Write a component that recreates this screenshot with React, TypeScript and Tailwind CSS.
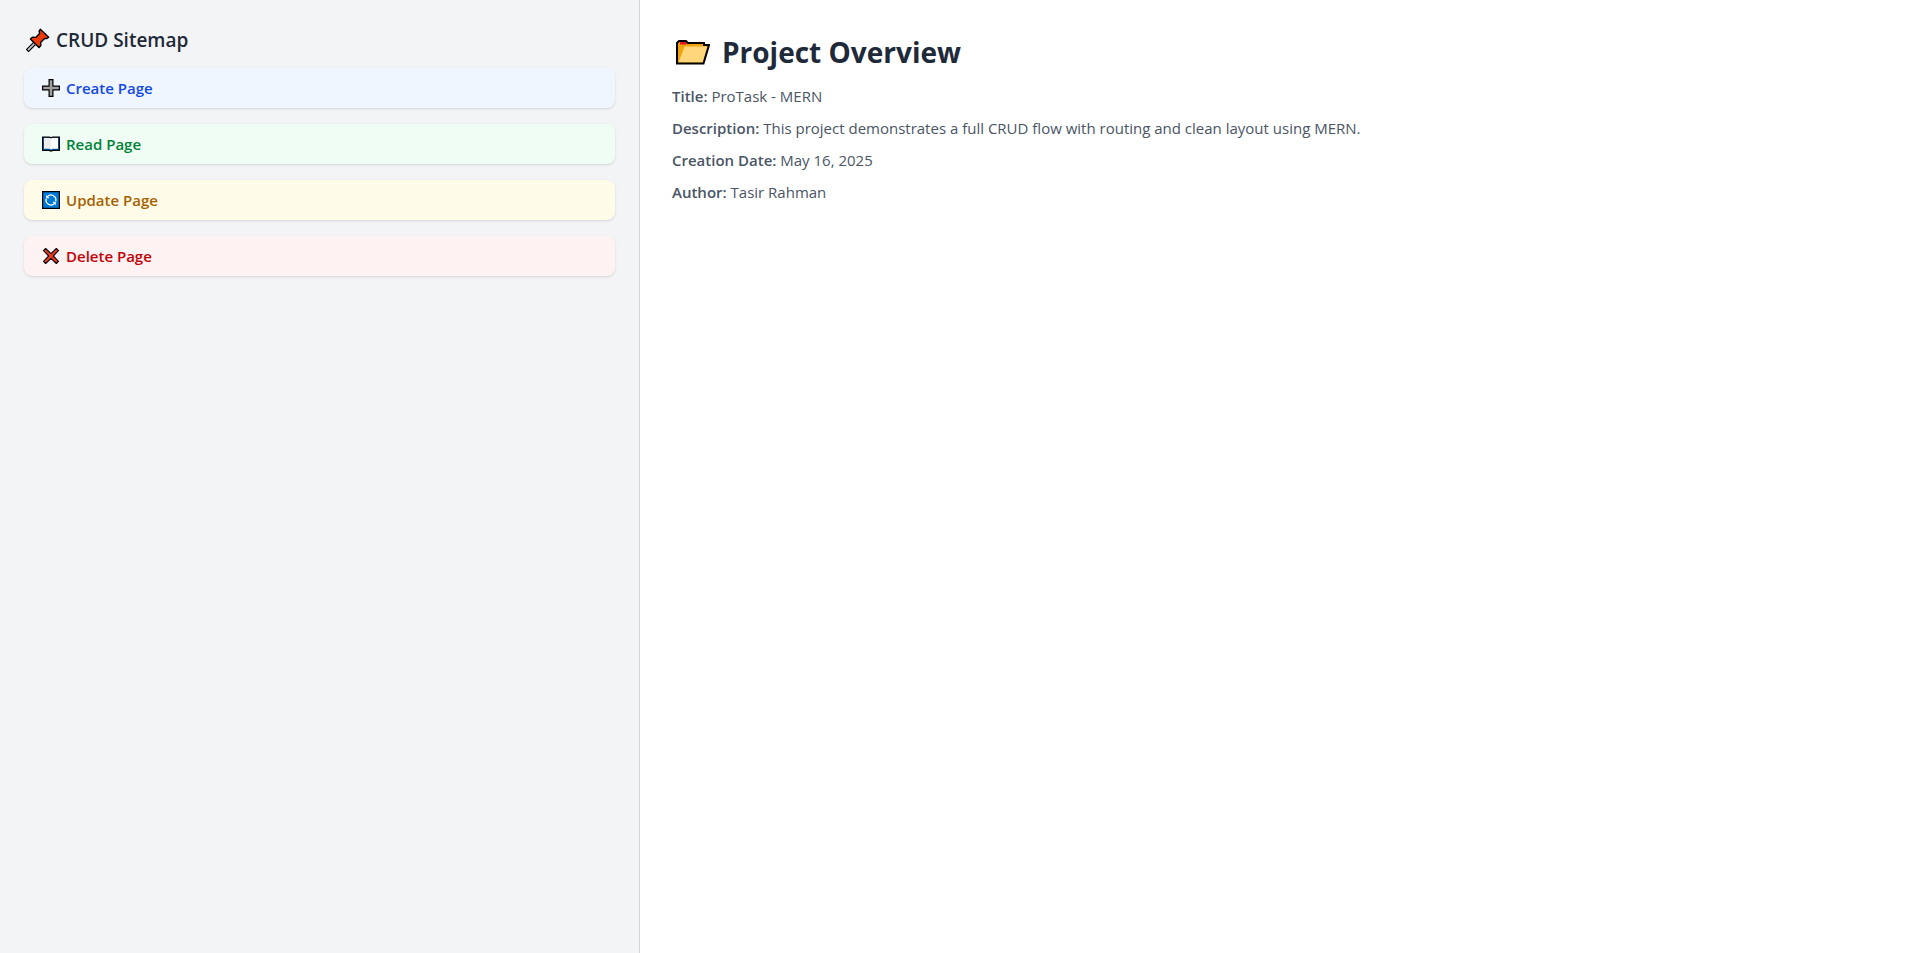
import type { ReactNode } from "react";

function PinIcon() {
  return (
    <svg viewBox="0 0 24 24" className="h-6 w-6 shrink-0" aria-hidden="true">
      <path d="M9.5 14.5 2.5 21.5" stroke="#000" strokeWidth="4" strokeLinecap="square" />
      <path d="M9.5 14.5 2.5 21.5" stroke="#c8ccd0" strokeWidth="1.6" strokeLinecap="square" />
      <path
        d="M14.3 1.3 22.7 9.2 20.6 10.6 18.6 10.4 14.6 14.4 14.9 17.6 13 19.6 4.4 11 6.4 9.2 9.8 9.4 13.6 5.4 13.1 3.2Z"
        fill="#f03a0c"
        stroke="#000"
        strokeWidth="1.4"
        strokeLinejoin="round"
      />
    </svg>
  );
}

function PlusIcon() {
  return (
    <svg viewBox="0 0 18 18" className="h-[18px] w-[18px]" aria-hidden="true">
      <path
        d="M7.1.6h3.8v6.5h6.5v3.8h-6.5v6.5H7.1v-6.5H.6V7.1h6.5Z"
        fill="#a0a0a0"
        stroke="#000"
        strokeWidth="1.2"
      />
    </svg>
  );
}

function BookIcon() {
  return (
    <svg viewBox="0 0 18 18" className="h-[18px] w-[18px]" aria-hidden="true">
      <path d="M.6 2.2H7.4L9 2.8l1.6-.6H17.4V15.4H11L9 16 7 15.4H.6Z" fill="#0063b1" stroke="#000" strokeWidth="1.2" />
      <path d="M2 2.9H8l1 .6V14.4l-1.500-.6H2Z" fill="#eeeeee" />
      <path d="M16 2.9H10l-1 .6V14.4l1.500-.6H16Z" fill="#fff" />
    </svg>
  );
}

function RefreshIcon() {
  return (
    <svg viewBox="0 0 18 18" className="h-[18px] w-[18px]" aria-hidden="true">
      <rect x=".6" y=".6" width="16.8" height="16.8" fill="#0078d7" stroke="#000" strokeWidth="1.2" />
      <g fill="none" stroke="#fff" strokeWidth="1.3">
        <path d="M5.500 5.500A4.900 4.900 0 0 1 13.700 10.300" />
        <path d="M12.500 12.500A4.900 4.900 0 0 1 4.300 7.700" />
      </g>
      <path d="M4.200 3.900V7.300H7.600ZM13.800 14.100V10.700H10.400Z" fill="#fff" />
    </svg>
  );
}

function CrossIcon() {
  return (
    <svg viewBox="0 0 18 18" className="h-[18px] w-[18px]" aria-hidden="true">
      <path
        d="M3.7 1.5 9 6.7 14.3 1.5 16.5 3.7 11.3 9 16.5 14.3 14.3 16.5 9 11.3 3.7 16.5 1.5 14.3 6.7 9 1.5 3.7Z"
        fill="#f03a17"
        stroke="#000"
        strokeWidth="1.1"
        strokeLinejoin="round"
      />
    </svg>
  );
}

function FolderIcon() {
  return (
    <svg viewBox="0 0 34 26" className="h-[26px] w-[34px] shrink-0" aria-hidden="true">
      <path d="M1 24.500V4L3 2H10L12 4H28V6H33L27.500 24.500Z" fill="#f0a30a" />
      <path d="M4.500 3H9.500L10.500 4V5.500H4V4Z" fill="#e81123" />
      <path d="M8.500 7.500H31.500L26.500 23.500H2.500Z" fill="#ffd679" />
      <path
        d="M1 24.500V4L3 2H10L12 4H28V6H33L27.500 24.500Z"
        fill="none"
        stroke="#000"
        strokeWidth="2"
      />
    </svg>
  );
}

const links: { label: string; href: string; tone: string; icon: ReactNode }[] = [
  { label: "Create Page", href: "#create", tone: "bg-blue-50 text-blue-700", icon: <PlusIcon /> },
  { label: "Read Page", href: "#read", tone: "bg-green-50 text-green-700", icon: <BookIcon /> },
  { label: "Update Page", href: "#update", tone: "bg-yellow-50 text-yellow-700", icon: <RefreshIcon /> },
  { label: "Delete Page", href: "#delete", tone: "bg-red-50 text-red-700", icon: <CrossIcon /> },
];

const details = [
  { term: "Title:", value: "ProTask - MERN" },
  {
    term: "Description:",
    value: "This project demonstrates a full CRUD flow with routing and clean layout using MERN.",
  },
  { term: "Creation Date:", value: "May 16, 2025" },
  { term: "Author:", value: "Tasir Rahman" },
];

export default function App() {
  return (
    <div className="flex min-h-screen bg-white font-['Open_Sans','Noto_Sans',sans-serif]">
      <aside className="w-1/3 border-r border-gray-300 bg-gray-100 p-6">
        <h2 className="mb-3.5 flex items-center gap-1.5 pt-0.5 pl-0.5 text-[19px] leading-7 font-semibold text-gray-800">
          <PinIcon />
          CRUD Sitemap
        </h2>
        <nav>
          <ul className="flex flex-col gap-4">
            {links.map((link) => (
              <li key={link.label}>
                <a
                  href={link.href}
                  className={`flex h-10 items-center gap-1.5 rounded-lg px-[18px] text-[15px] leading-6 font-semibold shadow-sm ${link.tone}`}
                >
                  {link.icon}
                  {link.label}
                </a>
              </li>
            ))}
          </ul>
        </nav>
      </aside>
      <main className="flex-1 p-8">
        <h1 className="mb-3.5 flex items-center gap-3 pt-0.5 pl-1 text-[28px] leading-9 font-bold text-gray-800">
          <FolderIcon />
          Project Overview
        </h1>
        <div className="flex flex-col gap-2 text-[15px] leading-6 text-gray-600">
          {details.map((item) => (
            <p key={item.term}>
              <strong className="font-semibold">{item.term}</strong> {item.value}
            </p>
          ))}
        </div>
      </main>
    </div>
  );
}
